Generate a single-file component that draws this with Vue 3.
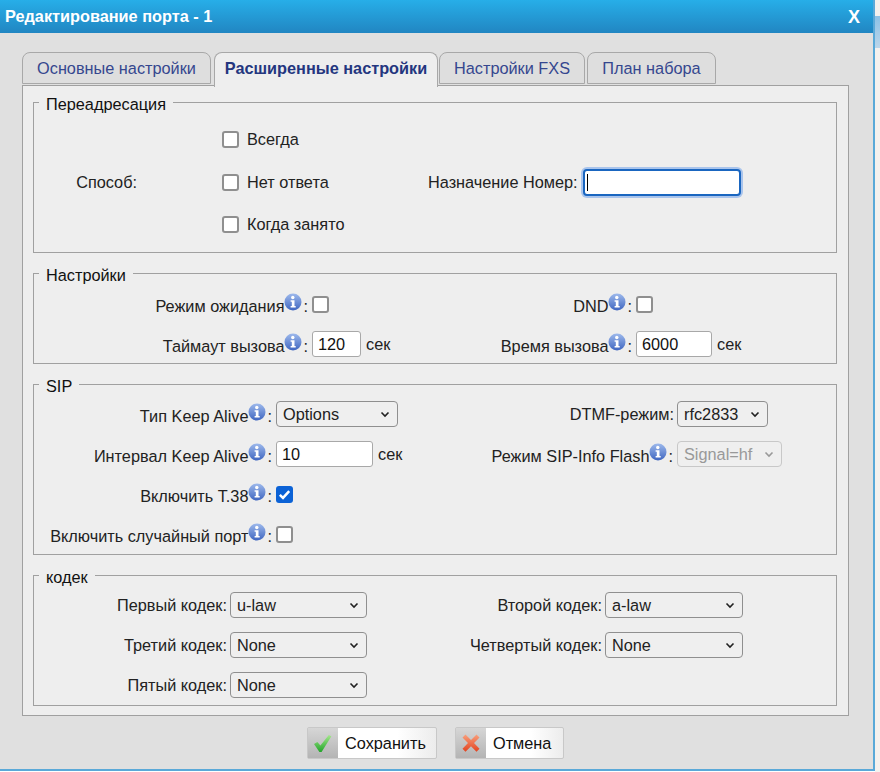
<template>
  <div class="page">
    <div class="side"><div class="side-band"></div></div>
    <div class="dialog">
      <div class="title-bar">
        <span>Редактирование порта - 1</span>
        <span class="close">X</span>
      </div>
      <div class="body">
        <div class="tabs">
          <div v-for="t in tabs" :key="t.name" class="tab" :class="{ active: t.active }" :style="{ width: t.width + 'px' }">{{ t.name }}</div>
        </div>
        <div class="panel">
          <fieldset class="box box-forward">
            <legend>Переадресация</legend>
            <div class="forward">
              <div class="way-label">Способ:</div>
              <div class="way-list">
                <label v-for="w in ways" :key="w" class="way"><span class="check"></span>{{ w }}</label>
              </div>
              <div class="dest">
                <span class="dest-label">Назначение Номер:</span>
                <span class="focus-input"><i class="caret"></i></span>
              </div>
            </div>
          </fieldset>

          <fieldset class="box box-settings">
            <legend>Настройки</legend>
            <div class="grid grid-settings">
              <div class="lbl">Режим ожидания<Info /><span class="colon">:</span></div>
              <div class="val"><span class="check"></span></div>
              <div class="lbl">DND<Info /><span class="colon">:</span></div>
              <div class="val"><span class="check"></span></div>
              <div class="lbl">Таймаут вызова<Info /><span class="colon">:</span></div>
              <div class="val"><span class="input w-call">120</span><span class="unit">сек</span></div>
              <div class="lbl">Время вызова<Info /><span class="colon">:</span></div>
              <div class="val"><span class="input w-time">6000</span><span class="unit">сек</span></div>
            </div>
          </fieldset>

          <fieldset class="box box-sip">
            <legend>SIP</legend>
            <div class="grid grid-sip">
              <div class="lbl">Тип Keep Alive<Info /><span class="colon">:</span></div>
              <div class="val"><Drop text="Options" :width="122" /></div>
              <div class="lbl plain">DTMF-режим<span class="colon">:</span></div>
              <div class="val"><Drop text="rfc2833" :width="91" /></div>
              <div class="lbl">Интервал Keep Alive<Info /><span class="colon">:</span></div>
              <div class="val"><span class="input w-alive">10</span><span class="unit">сек</span></div>
              <div class="lbl">Режим SIP-Info Flash<Info /><span class="colon">:</span></div>
              <div class="val"><Drop text="Signal=hf" :width="105" disabled /></div>
              <div class="lbl">Включить Т.38<Info /><span class="colon">:</span></div>
              <div class="val"><span class="check on"><svg width="17" height="17" viewBox="0 0 17 17"><path d="M3.8 8.8l3.2 3.1 6.2-6.8" fill="none" stroke="#fff" stroke-width="2.5"/></svg></span></div>
              <div></div><div></div>
              <div class="lbl">Включить случайный порт<Info /><span class="colon">:</span></div>
              <div class="val"><span class="check"></span></div>
              <div></div><div></div>
            </div>
          </fieldset>

          <fieldset class="box box-codec">
            <legend>кодек</legend>
            <div class="grid grid-codec">
              <template v-for="c in codecs" :key="c.label">
                <div class="lbl plain">{{ c.label }}<span class="colon">:</span></div>
                <div class="val"><Drop :text="c.value" :width="c.width" /></div>
              </template>
            </div>
          </fieldset>
        </div>
        <div class="actions">
          <button class="btn btn-save">
            <span class="btn-icon">
              <svg width="22" height="22" viewBox="0 0 22 22">
                <defs><linearGradient id="okFill" x1="0" y1="0" x2="0" y2="1"><stop offset="0" stop-color="#a5e88c"/><stop offset="1" stop-color="#22a52a"/></linearGradient></defs>
                <path d="M2 12l3.4-2 3 3.6L16.8 3l2.6 1.2L9.6 20H7.4z" fill="url(#okFill)"/>
              </svg>
            </span>
            <span class="btn-text">Сохранить</span>
          </button>
          <button class="btn btn-cancel">
            <span class="btn-icon">
              <svg width="22" height="22" viewBox="0 0 22 22">
                <defs><linearGradient id="noFill" x1="0" y1="0" x2="0" y2="1"><stop offset="0" stop-color="#f9a07c"/><stop offset="1" stop-color="#e2421f"/></linearGradient></defs>
                <path d="M2.5 5.5L5.5 2.500l5.500 5.500 5.500-5.500 3 3-5.500 5.500 5.500 5.800-3 3-5.500-5.500-5.500 5.500-3-3 5.500-5.800z" fill="url(#noFill)"/>
              </svg>
            </span>
            <span class="btn-text">Отмена</span>
          </button>
        </div>
      </div>
    </div>
  </div>
</template>

<script setup>
import { h } from 'vue'

const tabs = [
  { name: 'Основные настройки', width: 189 },
  { name: 'Расширенные настройки', width: 224, active: true },
  { name: 'Настройки FXS', width: 146 },
  { name: 'План набора', width: 129 }
]
const ways = ['Всегда', 'Нет ответа', 'Когда занято']
const codecs = [
  { label: 'Первый кодек', value: 'u-law', width: 137 },
  { label: 'Второй кодек', value: 'a-law', width: 138 },
  { label: 'Третий кодек', value: 'None', width: 137 },
  { label: 'Четвертый кодек', value: 'None', width: 138 },
  { label: 'Пятый кодек', value: 'None', width: 137 }
]

// маленькая иконка подсказки
const Info = () => h('svg', { class: 'info', width: 18, height: 18, viewBox: '0 0 18 18' }, [
  h('defs', [
    h('linearGradient', { id: 'infoFill', x1: 0, y1: 0, x2: 0, y2: 1 }, [
      h('stop', { offset: 0, 'stop-color': '#9db9ec' }),
      h('stop', { offset: 1, 'stop-color': '#3f66c0' })
    ])
  ]),
  h('circle', { cx: 9, cy: 9, r: 8.5, fill: 'url(#infoFill)' }),
  h('circle', { cx: 8.8, cy: 4.5, r: 1.7, fill: '#fff' }),
  h('path', { d: 'M6.600 7.200h3.900v5.800h1.200v1.600H6.600V13h1.200V8.800H6.600z', fill: '#fff' })
])

const Drop = (props) => h('span', {
  class: ['drop', props.disabled !== undefined && props.disabled !== false ? 'off' : ''],
  style: { width: props.width + 'px' }
}, [
  h('span', props.text),
  h('svg', { width: 12, height: 8, viewBox: '0 0 12 8' }, [
    h('path', { d: 'M2.500 2.500L6 6l3.500-3.500', fill: 'none', stroke: 'currentColor', 'stroke-width': 1.6 })
  ])
])
Drop.props = ['text', 'width', 'disabled']
</script>

<style>
html, body {
  margin: 0;
  background: #fff;
}
</style>

<style scoped>
.page {
  width: 880px;
  height: 772px;
  position: relative;
  overflow: hidden;
  font-family: "Liberation Sans", Arial, sans-serif;
  font-size: 16.3px;
  color: #222;
}
.side {
  position: absolute;
  top: 0;
  right: 0;
  bottom: 0;
  width: 5px;
  background: #f4f1ee;
}
.side-band {
  margin-top: 16px;
  height: 32px;
  background: linear-gradient(#8cc1e6, #bcd6ea);
}
.dialog {
  width: 873px;
  height: 769px;
  background: #e0e0e0;
  border-bottom: 2px solid #5aa9d8;
  border-right: 2px solid #5aa9d8;
}
.title-bar {
  height: 33px;
  box-sizing: border-box;
  padding: 0 13px 0 5px;
  display: flex;
  justify-content: space-between;
  align-items: center;
  background: linear-gradient(#27aee8, #2186c2);
  color: #fff;
  font-weight: bold;
}
.close {
  font-size: 18px;
  padding-top: 1px;
}
.body {
  padding: 19px 24px 0 22px;
}
.tabs {
  display: flex;
  gap: 2px;
  height: 34px;
  position: relative;
  z-index: 1;
  margin-bottom: -1px;
}
.tab {
  height: 32px;
  box-sizing: border-box;
  border: 1px solid #a8a8a8;
  border-radius: 8px 8px 0 0;
  background: #dedede;
  color: #35478f;
  line-height: 30px;
  text-align: center;
  white-space: nowrap;
}
.tab:first-child {
  margin-right: 1px;
}
.tab.active {
  height: 35px;
  margin-right: -1px;
  background: #eee;
  border-bottom: none;
  font-weight: bold;
  color: #24367f;
}
.panel {
  height: 631px;
  box-sizing: border-box;
  border: 1px solid #a0a0a0;
  background: #eee;
  padding: 5px 11px 0 10px;
}
.box {
  margin: 0 0 9px;
  padding: 0;
  box-sizing: border-box;
  border: 1px solid #a0a0a0;
  min-width: 0;
}
.box legend {
  margin-left: 5px;
  padding: 4px 7px 0;
  line-height: 18px;
  color: #111;
}
.box-forward { height: 162px; }
.box-settings { height: 102px; }
.box-sip { height: 182px; }
.box-codec { height: 142px; }
.forward {
  display: flex;
  align-items: center;
  height: 130px;
  margin-top: 4px;
}
.way-label {
  width: 103px;
  text-align: right;
  flex: none;
}
.way-list {
  margin-left: 85px;
  width: 206px;
  flex: none;
  display: flex;
  flex-direction: column;
  gap: 24.5px;
}
.way {
  display: flex;
  align-items: center;
  gap: 8px;
  height: 18px;
}
.dest {
  display: flex;
  align-items: center;
  gap: 5px;
}
.focus-input {
  width: 158px;
  height: 27px;
  box-sizing: border-box;
  display: flex;
  align-items: center;
  padding-left: 2px;
  background: #fff;
  border: 2px solid #1a66c0;
  border-radius: 4px;
  box-shadow: 0 0 0 2px #a9c4ec;
}
.caret {
  width: 1px;
  height: 17px;
  background: #000;
}
.check {
  display: inline-flex;
  flex: none;
  width: 17px;
  height: 17px;
  box-sizing: border-box;
  background: #fff;
  border: 2px solid #8f8f8f;
  border-radius: 3px;
}
.check.on {
  background: #0b62d6;
  border: none;
}
.grid {
  display: grid;
  align-items: center;
  white-space: nowrap;
}
.grid-settings {
  grid-template-columns: 277px 243px 81px 1fr;
  grid-auto-rows: 40px;
}
.grid-sip {
  grid-template-columns: 241px 225px 176px 1fr;
  grid-auto-rows: 40px;
  margin-top: -1px;
}
.grid-codec {
  grid-template-columns: 195px 204px 171px 1fr;
  grid-auto-rows: 40px;
  margin-top: -1px;
}
.lbl {
  display: flex;
  justify-content: flex-end;
  align-items: center;
  padding-top: 4px;
}
.lbl.plain {
  padding-top: 0;
}
.colon {
  margin: 0 3px 0 1px;
}
.plain .colon {
  margin: 0 2px 0 0;
}
.val {
  display: flex;
  align-items: center;
  padding-left: 1px;
}
.info {
  margin-bottom: 9px;
  flex: none;
}
.input {
  height: 26px;
  box-sizing: border-box;
  padding-left: 5px;
  line-height: 24px;
  background: #fff;
  border: 1px solid #a8a8a8;
  border-radius: 3px;
  color: #111;
}
.w-call { width: 49px; }
.w-time { width: 76px; }
.w-alive { width: 97px; }
.unit {
  margin-left: 5px;
}
.drop {
  display: inline-flex;
  align-items: center;
  justify-content: space-between;
  height: 26px;
  box-sizing: border-box;
  padding: 0 6px 0 6px;
  background: #efefef;
  border: 1px solid #8f8f8f;
  border-radius: 4px;
  color: #222;
}
.drop.off {
  color: #999;
  border-color: #c8c8c8;
}
.actions {
  display: flex;
  gap: 18px;
  padding: 11px 0 0 285px;
}
.btn {
  display: flex;
  align-items: stretch;
  height: 32px;
  padding: 0;
  border: 1px solid #c8c8c8;
  border-radius: 2px;
  background: linear-gradient(90deg, #fff 70%, #ececec);
  font: inherit;
  color: #111;
}
.btn-save { width: 130px; }
.btn-cancel { width: 109px; }
.btn-icon {
  width: 30px;
  flex: none;
  display: flex;
  align-items: center;
  justify-content: center;
  background: linear-gradient(#d6d6d6, #b4b4b4);
}
.btn-text {
  flex: 1;
  line-height: 30px;
  text-align: left;
  padding-left: 7px;
}
</style>
